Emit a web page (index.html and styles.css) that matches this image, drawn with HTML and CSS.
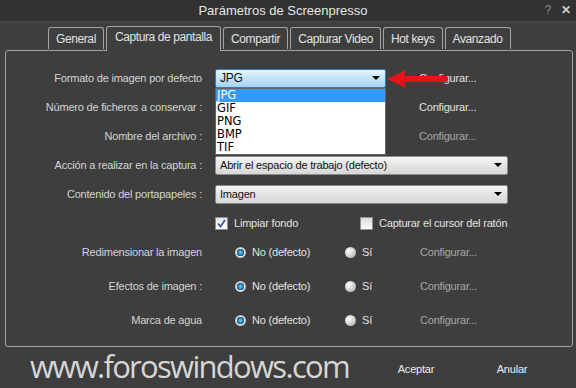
FILE: index.html
```html
<!DOCTYPE html>
<html lang="es">
<head>
    <meta charset="UTF-8">
    <title>Parámetros de Screenpresso</title>
    <link rel="stylesheet" href="styles.css">
</head>
<body>
    <div class="window">
        <div class="title-bar">
            <div class="title">Parámetros de Screenpresso</div>
            <div class="title-buttons">
                <span class="help">?</span>
                <span class="close">&#x2715;</span>
            </div>
        </div>

        <div class="tabs">
            <div class="tab">General</div>
            <div class="tab active">Captura de pantalla</div>
            <div class="tab">Compartir</div>
            <div class="tab">Capturar Video</div>
            <div class="tab">Hot keys</div>
            <div class="tab">Avanzado</div>
        </div>

        <div class="panel">
            <div class="row">
                <div class="label">Formato de imagen por defecto</div>
                <div class="control">
                    <div class="combo-wrap">
                        <div class="combo combo-small focused">
                            <span>JPG</span>
                            <span class="arrow"></span>
                        </div>
                        <ul class="dropdown">
                            <li class="selected">JPG</li>
                            <li>GIF</li>
                            <li>PNG</li>
                            <li>BMP</li>
                            <li>TIF</li>
                        </ul>
                        <svg class="red-arrow" width="62" height="22" viewBox="0 0 62 22">
                            <polygon points="1,11 20,2 18,8 61,8 61,14 18,14 20,20" fill="#e8121a"/>
                        </svg>
                    </div>
                    <span class="link">Configurar...</span>
                </div>
            </div>

            <div class="row">
                <div class="label">Número de ficheros a conservar :</div>
                <div class="control">
                    <div class="spacer"></div>
                    <span class="link">Configurar...</span>
                </div>
            </div>

            <div class="row">
                <div class="label">Nombre del archivo :</div>
                <div class="control">
                    <div class="spacer"></div>
                    <span class="link disabled">Configurar...</span>
                </div>
            </div>

            <div class="row">
                <div class="label">Acción a realizar en la captura :</div>
                <div class="control">
                    <div class="combo combo-wide">
                        <span>Abrir el espacio de trabajo (defecto)</span>
                        <span class="arrow"></span>
                    </div>
                </div>
            </div>

            <div class="row">
                <div class="label">Contenido del portapapeles :</div>
                <div class="control">
                    <div class="combo combo-wide">
                        <span>Imagen</span>
                        <span class="arrow"></span>
                    </div>
                </div>
            </div>

            <div class="row">
                <div class="label"></div>
                <div class="control">
                    <label class="check check-first">
                        <span class="box checked">
                            <svg width="9" height="9" viewBox="0 0 9 9">
                                <path d="M1 4.5 L3.5 7.5 L8 1" fill="none" stroke="#3b55a8" stroke-width="1.8"/>
                            </svg>
                        </span>
                        Limpiar fondo
                    </label>
                    <label class="check">
                        <span class="box"></span>
                        Capturar el cursor del ratón
                    </label>
                </div>
            </div>

            <div class="row row-radio first-radio">
                <div class="label">Redimensionar la imagen</div>
                <div class="control">
                    <span class="radio on"></span><span class="radio-text no">No (defecto)</span>
                    <span class="radio"></span><span class="radio-text si">Sí</span>
                    <span class="link disabled">Configurar...</span>
                </div>
            </div>

            <div class="row row-radio">
                <div class="label">Efectos de imagen :</div>
                <div class="control">
                    <span class="radio on"></span><span class="radio-text no">No (defecto)</span>
                    <span class="radio"></span><span class="radio-text si">Sí</span>
                    <span class="link disabled">Configurar...</span>
                </div>
            </div>

            <div class="row row-radio">
                <div class="label">Marca de agua</div>
                <div class="control">
                    <span class="radio on"></span><span class="radio-text no">No (defecto)</span>
                    <span class="radio"></span><span class="radio-text si">Sí</span>
                    <span class="link disabled">Configurar...</span>
                </div>
            </div>
        </div>

        <div class="footer">
            <div class="watermark">www.foroswindows.com</div>
            <div class="button">Aceptar</div>
            <div class="button">Anular</div>
        </div>
    </div>
</body>
</html>
```

FILE: styles.css
```css
body {
    margin: 0;
    padding: 0;
    background-color: #3e3e3e;
    font-family: "Liberation Sans", Arial, sans-serif;
    font-size: 11px;
    letter-spacing: -0.2px;
    color: #d4d4d4;
}
.window {
    width: 576px;
    height: 388px;
    background-color: #3e3e3e;
    overflow: hidden;
}

/* title bar */
.title-bar {
    height: 22px;
    background-color: #323232;
    border-bottom: 1px solid #4a4a4a;
    position: relative;
    display: flex;
    align-items: center;
    justify-content: center;
    box-sizing: border-box;
}
.title {
    font-size: 13px;
    letter-spacing: 0;
    color: #e6e6e6;
    margin-left: -10px;
}
.title-buttons {
    position: absolute;
    right: 5px;
    top: 3px;
    display: flex;
    gap: 10px;
    font-size: 12px;
    color: #8c8c8c;
}
.title-buttons .close {
    color: #d0d0d0;
    font-weight: bold;
}

/* tabs */
.tabs {
    height: 28px;
    display: flex;
    align-items: flex-end;
    gap: 2px;
    padding-left: 48px;
    box-sizing: border-box;
    position: relative;
    z-index: 2;
}
.tab {
    height: 22px;
    padding: 0 7px;
    border: 1px solid #a4a4a4;
    border-bottom: none;
    border-radius: 3px 3px 0 0;
    box-sizing: border-box;
    display: flex;
    align-items: center;
    color: #e2e2e2;
    font-size: 12px;
    letter-spacing: -0.4px;
    margin-bottom: 1px;
}
.tab.active {
    height: 25px;
    padding: 0 8px 4px 8px;
    background-color: #3e3e3e;
    margin-bottom: -1px;
}

/* panel */
.panel {
    height: 297px;
    margin: 0 3px 0 5px;
    border: 1px solid #a4a4a4;
    border-radius: 3px;
    box-sizing: border-box;
    padding-top: 17px;
    position: relative;
}
.row {
    height: 20px;
    display: flex;
    align-items: center;
    margin-bottom: 9px;
}
.row-radio {
    margin-bottom: 14px;
}
.first-radio {
    margin-top: 6px;
}
.label {
    width: 196px;
    text-align: right;
    flex-shrink: 0;
    white-space: nowrap;
}
.control {
    margin-left: 13px;
    display: flex;
    align-items: center;
    height: 20px;
}
.link {
    color: #e2e2e2;
    margin-left: 33px;
}
.link.disabled {
    color: #a6a6a6;
}
.spacer {
    width: 171px;
}

/* combo boxes */
.combo-wrap {
    position: relative;
}
.combo {
    height: 19px;
    border: 1px solid #8a8a8a;
    border-radius: 2px;
    box-sizing: border-box;
    background: linear-gradient(#f6f6f6, #e4e4e4 50%, #d8d8d8);
    color: #111;
    display: flex;
    align-items: center;
    justify-content: space-between;
    padding: 0 5px 0 4px;
}
.combo-small {
    width: 171px;
}
.combo-wide {
    width: 293px;
}
.combo.focused {
    border-color: #3d7bad;
    background: linear-gradient(#e6f3fc, #c4e3f8 50%, #a6d3f2);
    font-size: 12px;
}
.arrow {
    width: 0;
    height: 0;
    border-left: 4px solid transparent;
    border-right: 4px solid transparent;
    border-top: 4px solid #000;
}
.dropdown {
    position: absolute;
    top: 19px;
    left: 0;
    width: 171px;
    margin: 0;
    padding: 0;
    list-style: none;
    background-color: #fff;
    border: 1px solid #646464;
    box-sizing: border-box;
    z-index: 5;
    font-family: "DejaVu Sans", sans-serif;
    font-size: 11.5px;
    letter-spacing: 0;
}
.dropdown li {
    height: 13px;
    line-height: 13px;
    padding-left: 1px;
    color: #000;
    overflow: hidden;
}
.dropdown li.selected {
    background-color: #3399ff;
    color: #fff;
}
.red-arrow {
    position: absolute;
    left: 171px;
    top: -1px;
}

/* check boxes */
.check {
    display: flex;
    align-items: center;
    gap: 6px;
    color: #e2e2e2;
}
.check-first {
    width: 145px;
}
.box {
    width: 11px;
    height: 11px;
    border: 1px solid #8e8e8e;
    background: linear-gradient(#dcdcdc, #fafafa);
    display: flex;
    align-items: center;
    justify-content: center;
}
.box.checked {
    background: linear-gradient(#e6e6e6, #ffffff);
}

/* radio buttons */
.radio {
    width: 11px;
    height: 11px;
    border-radius: 50%;
    box-sizing: border-box;
    background: radial-gradient(circle at 35% 35%, #ffffff, #c8c8c8 60%, #9a9a9a);
    margin-left: 20px;
}
.radio.on {
    background: radial-gradient(circle, #7dd4f4 0, #1e7fb8 2.5px, #1b5d8a 3.5px, #e8e8e8 4px, #b4b4b4 5.5px);
}
.radio-text {
    margin-left: 6px;
    color: #e2e2e2;
}
.radio-text.no {
    width: 73px;
}
.radio-text.si {
    width: 30px;
}
.row-radio .link {
    margin-left: 28px;
}

/* bottom */
.footer {
    height: 41px;
    display: flex;
    align-items: center;
    padding-left: 30px;
}
.watermark {
    flex: 1;
    font-family: "Open Sans", sans-serif;
    font-size: 31px;
    color: #d6d6d6;
    letter-spacing: -1.7px;
    margin-top: -4px;
}
.button {
    width: 80px;
    text-align: center;
    font-size: 11px;
    color: #ececec;
    margin-right: 16px;
    margin-top: 3px;
}
.button:last-child {
    margin-right: 24px;
}
```
